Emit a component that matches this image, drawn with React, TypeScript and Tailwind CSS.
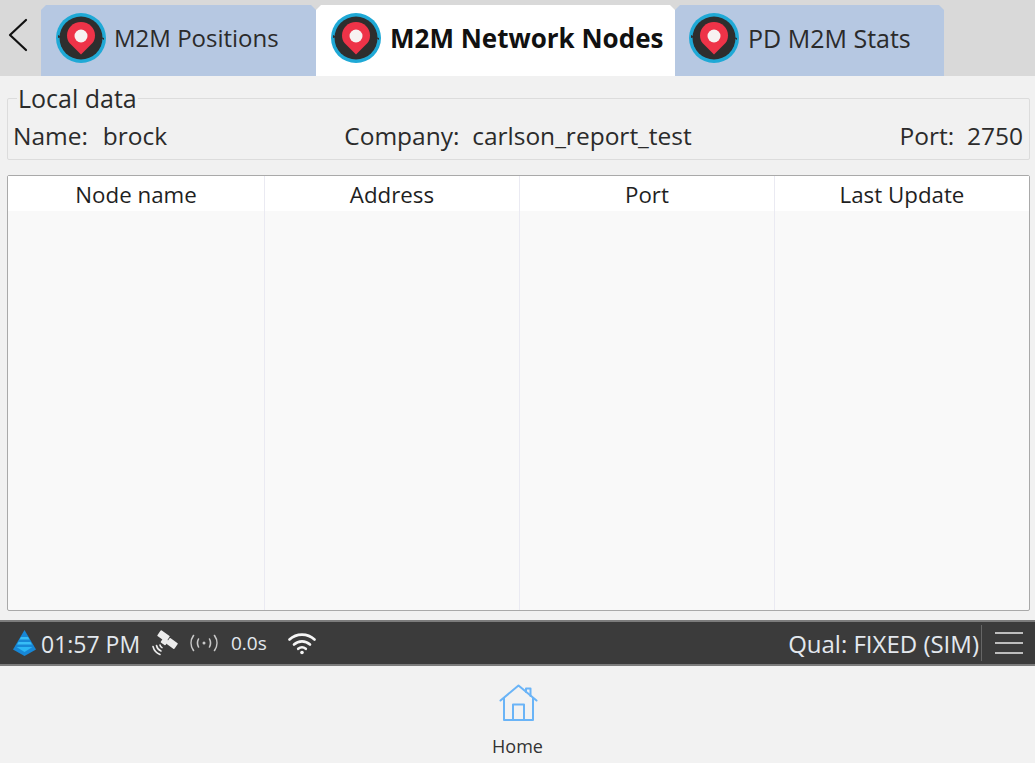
const font = { fontFamily: '"Open Sans", "Noto Sans", sans-serif' };

function PinIcon() {
  return (
    <svg width="50" height="50" viewBox="0 0 50 50" className="shrink-0">
      <circle cx="25" cy="25" r="25" fill="#1fa9d6" />
      <circle cx="25" cy="25" r="21.5" fill="#2e2e2e" />
      <path d="M2 22 L6 24 L2 25 Z M48 25 L44 24 L48 27 Z" fill="#2e2e2e" />
      <path d="M25 41.5 L13.5 30 C12 28 11 25.5 11 22.5 C11 15 17 9 25 9 C33 9 39 15 39 22.5 C39 25.5 38 28 36.5 30 Z" fill="#ee3348" />
      <circle cx="25" cy="23" r="6.5" fill="#f7f2f2" />
    </svg>
  );
}

function Tab({ label, active, className }: { label: string; active?: boolean; className: string }) {
  return (
    <div
      className={`flex h-[71px] items-center pb-[5px] [clip-path:polygon(5px_0,calc(100%-5px)_0,100%_5px,100%_100%,0_100%,0_5px)] ${className} ${active ? "bg-white font-bold text-[#111]" : "bg-[#b6c8e2] text-[#2b2b2b]"}`}
    >
      <PinIcon />
      <span className="whitespace-nowrap leading-none">{label}</span>
    </div>
  );
}

function StackLogo() {
  return (
    <svg width="23" height="26" viewBox="0 0 23 26">
      <path d="M11.5 0 L23 19.5 L11.5 26 L0 19.5 Z" fill="#1787d6" />
      <path d="M8 7 L15 7 L16.5 9.5 L6.5 9.5 Z M5.5 12 L17.5 12 L19 14.5 L4 14.5 Z" fill="#37bdf6" />
      <path d="M3.5 17 L19.5 17 L11.5 22 Z" fill="#2bb6f4" />
    </svg>
  );
}

function Satellite() {
  return (
    <svg width="26" height="26" viewBox="0 0 26 26" fill="none">
      <g fill="#ececec">
        <rect x="6" y="2.5" width="11" height="7" rx="1" transform="rotate(35 11.5 6)" />
        <rect x="9.5" y="8.5" width="6" height="6" rx="1" transform="rotate(35 12.5 11.5)" />
        <rect x="15" y="10" width="10" height="7" rx="1" transform="rotate(35 20 13.5)" />
      </g>
      <path d="M1 16.5 C2 20.5 4.5 23 8 24.5 M4.5 15.5 C5 18 6.5 20 9 21 M8 15 C8.2 16.2 8.8 17 10 17.6" stroke="#ececec" strokeWidth="1.6" strokeLinecap="round" />
    </svg>
  );
}

function Signal() {
  return (
    <svg width="28" height="20" viewBox="0 0 28 20" fill="none" stroke="#c9c9c9" strokeWidth="1.6" strokeLinecap="round">
      <circle cx="14" cy="10" r="1.5" fill="#c9c9c9" stroke="none" />
      <path d="M8.5 6 C7.2 8.5 7.2 11.5 8.5 14 M19.5 6 C20.8 8.5 20.8 11.5 19.5 14" />
      <path d="M3.5 2.5 C0.3 7 0.3 13 3.5 17.5 M24.5 2.5 C27.7 7 27.7 13 24.5 17.5" />
    </svg>
  );
}

function Wifi() {
  return (
    <svg width="28" height="23" viewBox="0 0 28 23" fill="none" stroke="#f5f5f5" strokeWidth="2.6" strokeLinecap="round">
      <path d="M1.5 7.5 C8.5 1 19.5 1 26.5 7.5" />
      <path d="M6 12.5 C10.5 8.3 17.5 8.3 22 12.5" />
      <path d="M10.2 16.8 C12.5 14.9 15.5 14.9 17.8 16.8" />
      <circle cx="14" cy="20.5" r="1.8" fill="#f5f5f5" stroke="none" />
    </svg>
  );
}

function HomeIcon() {
  return (
    <svg width="40" height="40" viewBox="0 0 40 40" fill="none" stroke="#6ab4f7" strokeWidth="2" strokeLinejoin="round" strokeLinecap="round">
      <path d="M1.5 17.5 L19.5 2.5 L37.5 17.5" />
      <path d="M5 15 V37 H34 V15" />
      <path d="M14 37 V21.5 H25 V37" />
      <path d="M27 9 V5.5 H31.5 V13" />
    </svg>
  );
}

const columns = ["Node name", "Address", "Port", "Last Update"];

export default function App() {
  return (
    <div className="flex h-[763px] w-[1035px] flex-col overflow-hidden bg-[#f2f2f2] text-[#2b2b2b]" style={font}>
      <div className="flex h-[76px] items-end bg-[#d9d9d9]">
        <div className="flex h-[76px] w-[41px] items-center pb-[7px] pl-[8px]">
          <svg width="20" height="34" viewBox="0 0 20 34" fill="none" stroke="#111" strokeWidth="2.2" strokeLinecap="round" strokeLinejoin="round">
            <path d="M18 2 L2 17 L18 32" />
          </svg>
        </div>
        <Tab label="M2M Positions" className="w-[275px] gap-[8px] pl-[15px] text-[24px]" />
        <Tab label="M2M Network Nodes" active className="w-[359px] gap-[9px] pl-[15px] text-[26px]" />
        <Tab label="PD M2M Stats" className="w-[269px] gap-[9px] pl-[14px] text-[25px]" />
      </div>

      <div className="flex h-[544px] flex-col bg-[#f1f1f1] px-[7px]">
        <fieldset className="mt-[10px] h-[74px] w-[1023px] rounded-[2px] border border-[#dcdcdc]">
          <legend className="ml-[9px] px-[1px] text-[25px] leading-[25px]">Local data</legend>
          <div className="grid grid-cols-[1fr_auto_1fr] items-center pl-[5px] pr-[6px] pt-[10px] text-[24.5px] leading-[30px]">
            <span className="whitespace-pre [word-spacing:1px]">Name:  brock</span>
            <span className="whitespace-pre text-center">Company:  carlson_report_test</span>
            <span className="whitespace-pre text-right">Port:  2750</span>
          </div>
        </fieldset>

        <div className="mt-[15px] grid h-[436px] w-[1023px] grid-cols-[257px_255px_255px_1fr] rounded-[2px] border border-[#a9a9a9] bg-[#f9f9f9]">
          {columns.map((c, i) => (
            <div key={c} className={`flex flex-col ${i < 3 ? "border-r border-[#eaeaf2]" : ""}`}>
              <div className="flex h-[35px] items-center justify-center bg-white pt-[2px] text-[22.3px] text-[#1f1f1f]">{c}</div>
            </div>
          ))}
        </div>
      </div>

      <div className="flex h-[46px] items-center border-y-2 border-y-[#7c7c7c] bg-[#3b3b3b] pl-[13px] text-[#e3e8ee]">
        <StackLogo />
        <span className="ml-[5px] w-[111px] whitespace-nowrap pt-[2px] text-[23px] leading-none">01:57 PM</span>
        <Satellite />
        <span className="ml-[12px]"><Signal /></span>
        <span className="ml-[13px] w-[57px] text-[19px] leading-none">0.0s</span>
        <Wifi />
        <span className="ml-auto whitespace-nowrap pt-[2px] text-[24px] leading-none">Qual: FIXED (SIM)</span>
        <div className="ml-[2px] flex h-[36px] w-[54px] items-center justify-center border-l border-[#666]">
          <div className="flex w-[28px] flex-col gap-[8px]">
            <div className="h-[2px] bg-[#bdbdbd]" />
            <div className="h-[2px] bg-[#bdbdbd]" />
            <div className="h-[2px] bg-[#bdbdbd]" />
          </div>
        </div>
      </div>

      <div className="flex flex-1 flex-col items-center pt-[17px]">
        <span className="ml-[3px]"><HomeIcon /></span>
        <span className="mt-[14px] text-[18px] leading-none text-[#333]">Home</span>
      </div>
    </div>
  );
}
